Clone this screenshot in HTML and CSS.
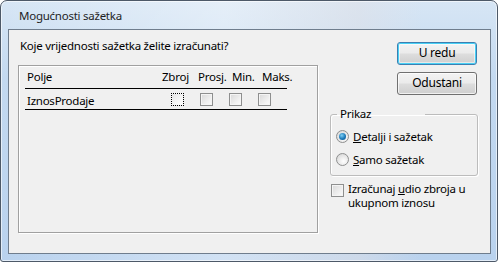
FILE: index.html
```html
<!DOCTYPE html>
<html lang="hr">
<head>
  <meta charset="UTF-8" />
  <title>Mogućnosti sažetka</title>
  <link rel="stylesheet" href="styles.css">
</head>
<body>
  <div class="window">
    <div class="titlebar">Mogućnosti sažetka</div>

    <div class="client">
      <div class="left-col">
        <div class="question">Koje vrijednosti sažetka želite izračunati?</div>

        <div class="panel">
          <div class="grid-head">
            <span class="col-name">Polje</span>
            <span class="col-h h1">Zbroj</span>
            <span class="col-h h2">Prosj.</span>
            <span class="col-h h3">Min.</span>
            <span class="col-h h4">Maks.</span>
          </div>
          <div class="grid-row">
            <span class="row-name">IznosProdaje</span>
            <span class="chk focus"></span>
            <span class="chk"></span>
            <span class="chk"></span>
            <span class="chk"></span>
          </div>
        </div>
      </div>

      <div class="right-col">
        <div class="btn default">U redu</div>
        <div class="btn">Odustani</div>

        <fieldset class="group">
          <legend>Prikaz</legend>
          <div class="radio-row">
            <span class="radio checked"></span>
            <span><u>D</u>etalji i sažetak</span>
          </div>
          <div class="radio-row">
            <span class="radio"></span>
            <span><u>S</u>amo sažetak</span>
          </div>
        </fieldset>

        <div class="check-row">
          <span class="chk"></span>
          <span class="check-text">Izračunaj <u>u</u>dio zbroja u<br>ukupnom iznosu</span>
        </div>
      </div>
    </div>
  </div>
</body>
</html>
```

FILE: styles.css
```css
* {
  box-sizing: border-box;
}

body {
  margin: 0;
  width: 498px;
  height: 262px;
  overflow: hidden;
  background: #fff;
  font-family: "Noto Sans", "Open Sans", sans-serif;
  font-size: 11.5px;
  letter-spacing: -0.25px;
  color: #000;
}

.window {
  width: 498px;
  height: 262px;
  border: 1px solid #4d5968;
  border-radius: 7px 7px 3px 3px;
  padding: 0 6px 7px 7px;
  background:
    linear-gradient(90deg, rgba(255,255,255,0) 0%, rgba(255,255,255,0.35) 45%, rgba(225,225,230,0.5) 72%, rgba(255,255,255,0) 85%),
    linear-gradient(180deg, #d7e6f5 0%, #c3d9f0 30%, #b9d2ee 100%);
  box-shadow: inset 0 0 0 1px rgba(255,255,255,0.6);
}

.titlebar {
  height: 28px;
  line-height: 30px;
  padding-left: 11px;
  font-size: 11.5px;
  color: #1e1e1e;
}

.client {
  display: flex;
  height: 225px;
  border: 1px solid #6f7d8d;
  background: #f0f0f0;
}

/* left side: question + list panel */
.left-col {
  width: 309px;
  padding-left: 9px;
}

.question {
  margin-top: 8px;
  margin-left: 2px;
  line-height: 16px;
  white-space: nowrap;
}

.panel {
  margin-top: 11px;
  width: 300px;
  height: 168px;
  border: 1px solid #a0a0a0;
  box-shadow: 1px 1px 0 #fff, inset 1px 1px 0 #fff;
  padding: 3px 0 0 6px;
}

.grid-head,
.grid-row {
  display: flex;
  width: 262px;
  white-space: nowrap;
}

.grid-head {
  height: 20px;
  line-height: 16px;
  border-bottom: 1px solid #000;
}

.grid-row {
  height: 21px;
  padding-top: 4px;
  line-height: 16px;
  border-bottom: 1px solid #000;
}

.col-name {
  width: 137px;
  padding-left: 2px;
}

.col-h.h1 { width: 36px; }
.col-h.h2 { width: 34px; }
.col-h.h3 { width: 30px; }
.col-h.h4 { width: 25px; }

.row-name {
  width: 155px;
  padding-left: 2px;
}

.grid-row .chk {
  margin-right: 16px;
}

.chk {
  display: inline-block;
  flex-shrink: 0;
  width: 13px;
  height: 13px;
  border: 1px solid #8e8f8f;
  background: linear-gradient(135deg, #d8d8d8 0%, #f2f2f2 70%, #fbfbfb 100%);
  box-shadow: inset 0 0 0 1px #f4f4f4;
}

.chk.focus {
  border: 1px dotted #000;
  background: linear-gradient(135deg, #e4e4e4 0%, #fafafa 70%);
  box-shadow: none;
}

/* right side: buttons + options */
.right-col {
  flex: 1;
  padding-left: 12px;
}

.btn {
  width: 80px;
  height: 23px;
  margin-left: 67px;
  margin-top: 7px;
  border: 1px solid #707070;
  border-radius: 3px;
  text-align: center;
  line-height: 20px;
  font-size: 12px;
  background: linear-gradient(180deg, #f3f3f3 0%, #ebebeb 48%, #dddddd 52%, #cfcfcf 100%);
  box-shadow: inset 0 0 0 1px rgba(255,255,255,0.7);
}

.btn.default {
  margin-top: 12px;
  border-color: #3c7fb1;
  box-shadow: inset 0 0 0 1px #48d0f5, inset 0 0 0 2px rgba(255,255,255,0.5);
}

.group {
  margin: 11px 0 0 0;
  width: 148px;
  padding: 6px 5px 8px 5px;
  border: 1px solid #bcbcbc;
  border-radius: 3px;
  box-shadow: inset 1px 1px 0 #fff, 1px 1px 0 #fff;
}

.group legend {
  width: 88px;
  padding: 0 0 0 3px;
  margin-left: 1px;
  line-height: 16px;
}

.radio-row {
  display: flex;
  align-items: center;
  gap: 4px;
  height: 16px;
  white-space: nowrap;
}

.radio-row + .radio-row {
  margin-top: 7px;
}

.radio {
  display: inline-block;
  width: 13px;
  height: 13px;
  border-radius: 50%;
  border: 1px solid #8e8f8f;
  background: radial-gradient(circle at 60% 65%, #ffffff 0%, #e6e6e6 55%, #cfcfcf 100%);
  position: relative;
}

.radio.checked::after {
  content: "";
  position: absolute;
  left: 2px;
  top: 2px;
  width: 7px;
  height: 7px;
  border-radius: 50%;
  background: radial-gradient(circle at 40% 35%, #7fd0f5 0%, #1c79b8 55%, #0d4f85 100%);
}

.check-row {
  display: flex;
  align-items: flex-start;
  gap: 4px;
  margin-top: 6px;
  margin-left: 1px;
  line-height: 14px;
}

.check-row .chk {
  margin-top: 2px;
}

.check-text {
  white-space: nowrap;
}
```
